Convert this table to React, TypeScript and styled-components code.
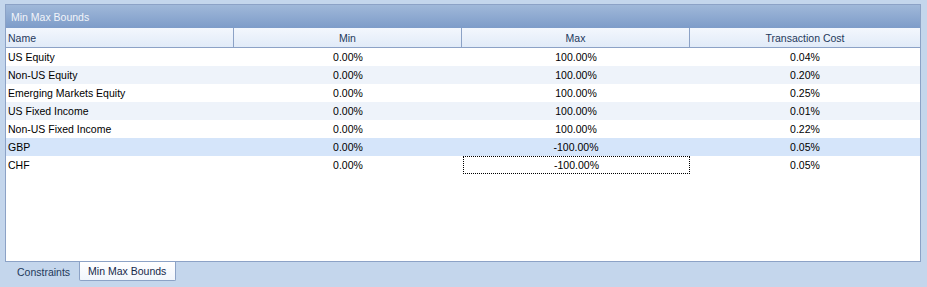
import React from "react";
import styled, { createGlobalStyle, css } from "styled-components";

const Global = createGlobalStyle`
  html, body { margin: 0; padding: 0; }
  body {
    background: #c4d6ec;
    font-family: "Liberation Sans", Arial, sans-serif;
    font-size: 10.5px;
  }
`;

const Page = styled.div`
  width: 927px;
  height: 287px;
  box-sizing: border-box;
  padding: 4px 6px 0 5px;
  display: flex;
  flex-direction: column;
  background: #c4d6ec;
`;

const Panel = styled.div`
  height: 258px;
  flex: none;
  box-sizing: border-box;
  border: 1px solid #8ca2c6;
  background: #ffffff;
  display: flex;
  flex-direction: column;
`;

const TitleBar = styled.div`
  height: 23px;
  flex: none;
  display: flex;
  align-items: center;
  padding-left: 5px;
  color: #f2f5fa;
  font-size: 10.5px;
  background: linear-gradient(#a0b8d9, #7d9cc9);
`;

const Grid = styled.div`
  display: grid;
  grid-template-columns: 228px 228px 228px 1fr;
`;

const HeaderRow = styled(Grid)`
  height: 19px;
  flex: none;
  border-bottom: 1px solid #8ca2c6;
  background: linear-gradient(#f3f7fd, #e1ebf8);
  color: #1e395b;
`;

const HeaderCell = styled.div<{ $left?: boolean; $last?: boolean }>`
  display: flex;
  align-items: center;
  justify-content: ${(p) => (p.$left ? "flex-start" : "center")};
  padding-left: ${(p) => (p.$left ? "2px" : "0")};
  border-right: ${(p) => (p.$last ? "none" : "1px solid #8ca2c6")};
  box-sizing: border-box;
`;

const Row = styled(Grid)<{ $alt?: boolean; $selected?: boolean }>`
  height: 18px;
  flex: none;
  color: #000;
  background: ${(p) => (p.$selected ? "#d5e5fa" : p.$alt ? "#eef3fa" : "#ffffff")};
`;

const Cell = styled.div<{ $left?: boolean; $focus?: boolean }>`
  display: flex;
  align-items: center;
  justify-content: ${(p) => (p.$left ? "flex-start" : "center")};
  padding-left: ${(p) => (p.$left ? "2px" : "0")};
  box-sizing: border-box;
  ${(p) =>
    p.$focus &&
    css`
      border: 1px dotted #000;
      margin-left: 1px;
    `}
`;

const TabStrip = styled.div`
  display: flex;
  padding-left: 4px;
  height: 19px;
`;

const Tab = styled.div<{ $active?: boolean }>`
  display: flex;
  align-items: center;
  padding: 0 9px 0 8px;
  color: #1e395b;
  box-sizing: border-box;
  ${(p) =>
    p.$active &&
    css`
      color: #15284a;
      background: linear-gradient(#ffffff, #f1f6fc);
      border: 1px solid #8ca2c6;
      border-top: none;
      border-radius: 0 0 2px 2px;
    `}
`;

const rows = [
  ["US Equity", "0.00%", "100.00%", "0.04%"],
  ["Non-US Equity", "0.00%", "100.00%", "0.20%"],
  ["Emerging Markets Equity", "0.00%", "100.00%", "0.25%"],
  ["US Fixed Income", "0.00%", "100.00%", "0.01%"],
  ["Non-US Fixed Income", "0.00%", "100.00%", "0.22%"],
  ["GBP", "0.00%", "-100.00%", "0.05%"],
  ["CHF", "0.00%", "-100.00%", "0.05%"],
];

export default function App() {
  return (
    <>
      <Global />
      <Page>
        <Panel>
          <TitleBar>Min Max Bounds</TitleBar>
          <HeaderRow>
            <HeaderCell $left>Name</HeaderCell>
            <HeaderCell>Min</HeaderCell>
            <HeaderCell>Max</HeaderCell>
            <HeaderCell $last>Transaction Cost</HeaderCell>
          </HeaderRow>
          {rows.map((r, i) => (
            <Row key={r[0]} $alt={i % 2 === 1} $selected={i === 5}>
              <Cell $left>{r[0]}</Cell>
              <Cell>{r[1]}</Cell>
              <Cell $focus={i === 6}>{r[2]}</Cell>
              <Cell>{r[3]}</Cell>
            </Row>
          ))}
        </Panel>
        <TabStrip>
          <Tab>Constraints</Tab>
          <Tab $active>Min Max Bounds</Tab>
        </TabStrip>
      </Page>
    </>
  );
}
